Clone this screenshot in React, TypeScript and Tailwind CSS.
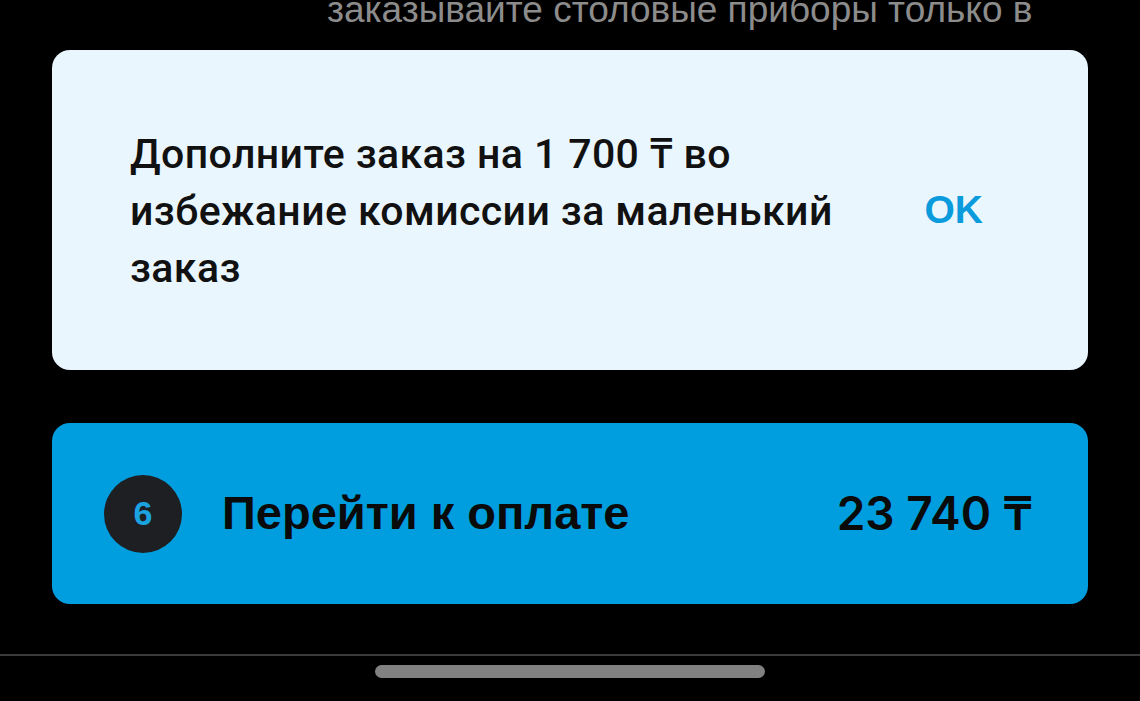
import React from 'react';

export default function App() {
    return (
        <div className="h-[701px] w-full overflow-hidden bg-black flex flex-col font-['Liberation_Sans',Arial,sans-serif]">
            {/* tail of the cutlery hint scrolled above the sheet */}
            <p className="-mt-[10px] h-[36px] pl-[327px] text-[37px] leading-[40px] text-[#8c8c8c] whitespace-nowrap">
                заказывайте столовые приборы только в
            </p>

            <div className="mx-[52px] mt-[24px] h-[320px] rounded-[18px] bg-[#eaf6fd] flex items-center justify-between pl-[78px] pr-[105px]">
                <p className="w-[730px] pt-[2px] text-[41px] leading-[57px] tracking-[0.4px] font-medium text-[#111] font-['Roboto','Noto_Sans',sans-serif]">
                    Дополните заказ на 1 700 ₸ во избежание комиссии за маленький заказ
                </p>
                <button className="text-[39px] font-bold text-[#0a9bdc]">OK</button>
            </div>

            <button className="mx-[52px] mt-[53px] h-[181px] rounded-[18px] bg-[#009ede] flex items-center pl-[52px] pr-[55px]">
                <span className="h-[78px] w-[78px] rounded-full bg-[#1e1f22] flex items-center justify-center text-[34px] font-bold text-[#1aa3e0]">
                    6
                </span>
                <span className="ml-[40px] text-[47px] font-bold text-[#0a0a0a]">Перейти к оплате</span>
                <span className="ml-auto text-[46px] font-semibold text-[#0a0a0a] font-['Inter','DejaVu_Sans',sans-serif]">
                    23 740 ₸
                </span>
            </button>

            <div className="mt-[50px] h-[2px] bg-[#3a3a3a]" />
            <div className="mt-[9px] mx-auto h-[13px] w-[390px] rounded-full bg-[#818181]" />
        </div>
    );
}
